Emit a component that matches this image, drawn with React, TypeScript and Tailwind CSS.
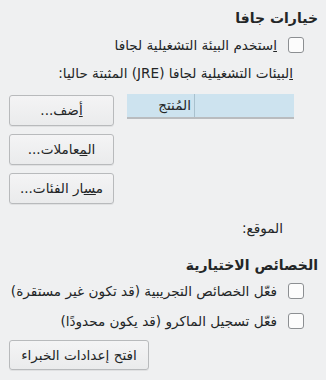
import React from "react";

const font = { fontFamily: '"DejaVu Sans", "Noto Sans", sans-serif' };

function Checkbox() {
  return (
    <span className="inline-block w-[16px] h-[16px] rounded-[3px] border border-[#8c8f92] bg-[#fcfcfc] shrink-0" />
  );
}

function Btn({ children, w = "w-[105px]", h = "h-[31px]" }: { children: React.ReactNode; w?: string; h?: string }) {
  return (
    <div
      className={`${w} ${h} rounded-[3px] border border-[#b8babc] bg-gradient-to-b from-[#f4f4f5] to-[#eaebec] shadow-[0_1px_0_rgba(0,0,0,0.06)] flex items-center justify-center text-[13.6px] text-[#232627]`}
    >
      {children}
    </div>
  );
}

export default function App() {
  return (
    <div
      dir="rtl"
      style={font}
      className="w-[326px] h-[380px] bg-[#eff0f1] text-[#232627] text-[13.6px] pr-[8px] pl-[9px] flex flex-col overflow-hidden"
    >
      <div className="mt-[8px] h-[20px] leading-[20px] font-bold text-[14px]">خيارات جافا</div>
      <div className="mt-[8px] h-[18px] flex items-center gap-[11px] pr-[14px]">
        <Checkbox />
        <span className="leading-[18px]"><u>ا</u>ستخدم البيئة التشغيلية لجافا</span>
      </div>
      <div className="mt-[9px] h-[20px] leading-[20px] pr-[25px]">
        <u>ا</u>لبيئات التشغيلية لجافا (JRE) المثبتة حاليا:
      </div>
      <div className="mt-[11px] flex justify-between">
        <div className="mr-[24px] w-[167px] h-[25px] flex flex-col">
          <div className="h-[23px] bg-[#cde3ef] flex">
            <div className="w-[100px] border-l border-[#a9c1ce]" />
            <div className="flex-1 flex items-center pr-[3px]">المُنتج</div>
          </div>
          <div className="h-[2px] bg-[#b9bcbf]" />
        </div>
        <div className="mt-[1px] flex flex-col gap-[8px]">
          <Btn>
            <span><u>أ</u>ضف...</span>
          </Btn>
          <Btn>
            <span>ال<u>م</u>عاملات...</span>
          </Btn>
          <Btn>
            <span>م<u>س</u>ار الفئات...</span>
          </Btn>
        </div>
      </div>
      <div className="mt-[14px] h-[20px] leading-[20px] pr-[35px]">الموقع:</div>
      <div className="mt-[17px] h-[20px] leading-[20px] font-bold text-[14px]">الخصائص الاختيارية</div>
      <div className="mt-[7px] h-[18px] flex items-center gap-[11px] pr-[14px]">
        <Checkbox />
        <span className="leading-[18px]">فعّل الخصائص التجريبية (قد تكون غير مستقرة)</span>
      </div>
      <div className="mt-[12px] h-[18px] flex items-center gap-[11px] pr-[14px]">
        <Checkbox />
        <span className="leading-[18px]">فعّل تسجيل الماكرو (قد يكون محدودًا)</span>
      </div>
      <div className="mt-[10px] flex justify-end">
        <Btn w="w-[140px]" h="h-[30px]">
          <span>افتح إعدادات الخبراء</span>
        </Btn>
      </div>
    </div>
  );
}
